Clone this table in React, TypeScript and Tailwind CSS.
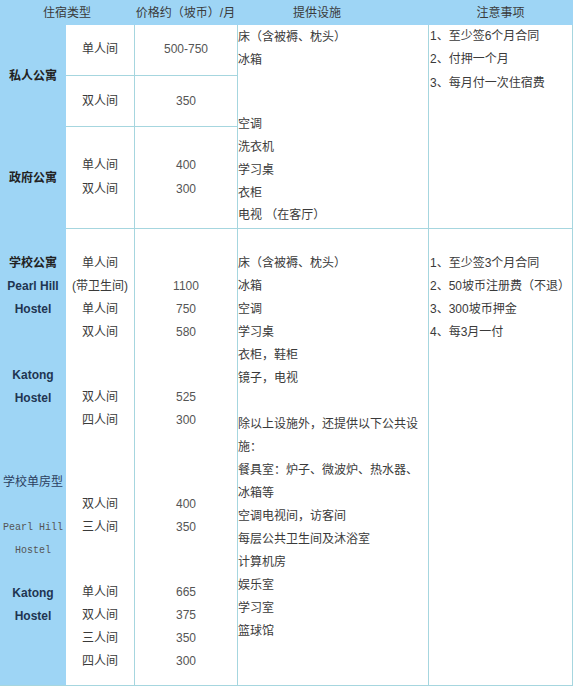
const line = "h-[23px] leading-[23px] whitespace-nowrap";
const navy = "font-bold text-[#1f3552] font-['Liberation_Sans',sans-serif]";
const mono = "text-[10px] text-[#555] font-['Liberation_Mono',monospace]";

const schoolFacilities = [
  "床（含被褥、枕头）",
  "冰箱",
  "空调",
  "学习桌",
  "衣柜，鞋柜",
  "镜子，电视",
  "\u00a0",
  "除以上设施外，还提供以下公共设",
  "施：",
  "餐具室：炉子、微波炉、热水器、",
  "冰箱等",
  "空调电视间，访客间",
  "每层公共卫生间及沐浴室",
  "计算机房",
  "娱乐室",
  "学习室",
  "篮球馆",
];

const schoolNotes = [
  "1、至少签3个月合同",
  "2、50坡币注册费（不退）",
  "3、300坡币押金",
  "4、每3月一付",
];

const Lines = ({ items, className = "" }: { items: string[]; className?: string }) => (
  <div className={className}>
    {items.map((t, i) => (
      <div key={i} className={line}>
        {t}
      </div>
    ))}
  </div>
);

export default function App() {
  return (
    <div className="w-[573px] bg-white text-[12px] text-[#3a3a3a] font-['Liberation_Sans','Noto_Sans_CJK_SC',sans-serif]">
      {/* 表头 */}
      <div className="flex h-[25px] items-center bg-[#9ed5f5] text-[#3a3a3a]">
        <div className="w-[134px] text-center">住宿类型</div>
        <div className="w-[103px] text-center">价格约（坡币）/月</div>
        <div className="w-[191px] pl-[56px]">提供设施</div>
        <div className="flex-1 text-center">注意事项</div>
      </div>

      {/* 私人公寓 / 政府公寓 */}
      <div className="grid grid-cols-[66px_68px_103px_191px_145px] grid-rows-[51px_51px_102px]">
        <div className="col-start-1 row-start-1 row-span-2 flex items-center justify-center bg-[#9ed5f5] font-bold text-[#222]">
          私人公寓
        </div>
        <div className="col-start-1 row-start-3 flex items-center justify-center bg-[#9ed5f5] font-bold text-[#222]">
          政府公寓
        </div>

        <div className="col-start-2 row-start-1 flex items-center justify-center border-b border-[#a6d6df] pb-[2px]">
          单人间
        </div>
        <div className="col-start-3 row-start-1 flex items-center justify-center border-b border-l border-[#a6d6df] pb-[2px] text-[#555]">
          500-750
        </div>
        <div className="col-start-2 row-start-2 flex items-center justify-center border-b border-[#a6d6df]">
          双人间
        </div>
        <div className="col-start-3 row-start-2 flex items-center justify-center border-b border-l border-[#a6d6df] text-[#555]">
          350
        </div>
        <div className="col-start-2 row-start-3 flex flex-col items-center justify-center border-b border-[#a6d6df] pb-[2px]">
          <div className="h-[24px] leading-[24px]">单人间</div>
          <div className="h-[24px] leading-[24px]">双人间</div>
        </div>
        <div className="col-start-3 row-start-3 flex flex-col items-center justify-center border-b border-l border-[#a6d6df] pb-[2px] text-[#555]">
          <div className="h-[24px] leading-[24px]">400</div>
          <div className="h-[24px] leading-[24px]">300</div>
        </div>

        <div className="col-start-4 row-start-1 row-span-3 border-b border-l border-[#a6d6df] pt-px leading-[22.7px]">
          <div className="whitespace-nowrap">床（含被褥、枕头）</div>
          <div>冰箱</div>
          <div className="mt-[42px]">空调</div>
          <div>洗衣机</div>
          <div>学习桌</div>
          <div>衣柜</div>
          <div className="whitespace-nowrap">电视 （在客厅）</div>
        </div>
        <div className="col-start-5 row-start-1 row-span-3 border-b border-l border-r border-[#a6d6df] pl-px leading-[23.4px]">
          <div>1、至少签6个月合同</div>
          <div>2、付押一个月</div>
          <div>3、每月付一次住宿费</div>
        </div>
      </div>

      {/* 学校公寓 / 学校单房型 */}
      <div className="grid h-[457px] grid-cols-[66px_68px_103px_191px_145px] border-b border-[#a6d6df]">
        <div className="flex flex-col items-center bg-[#9ed5f5] pt-[23px]">
          <div className={`${line} font-bold text-[#222]`}>学校公寓</div>
          <div className={`${line} ${navy}`}>Pearl Hill</div>
          <div className={`${line} ${navy}`}>Hostel</div>
          <div className={`${line} ${navy} mt-[43px]`}>Katong</div>
          <div className={`${line} ${navy}`}>Hostel</div>
          <div className={`${line} mt-[61px] text-[#2c4060]`}>学校单房型</div>
          <div className={`${line} ${mono} mt-[22px]`}>Pearl Hill</div>
          <div className={`${line} ${mono}`}>Hostel</div>
          <div className={`${line} ${navy} mt-[20px]`}>Katong</div>
          <div className={`${line} ${navy}`}>Hostel</div>
        </div>

        <div className="flex flex-col items-center pt-[23px]">
          <Lines items={["单人间", "(带卫生间)", "单人间", "双人间"]} className="text-center" />
          <Lines items={["双人间", "四人间"]} className="mt-[42px] text-center" />
          <Lines items={["双人间", "三人间"]} className="mt-[61px] text-center" />
          <Lines items={["单人间", "双人间", "三人间", "四人间"]} className="mt-[42px] text-center" />
        </div>

        <div className="flex flex-col items-center border-l border-[#a6d6df] pt-[23px] text-[#555]">
          <Lines items={["\u00a0", "1100", "750", "580"]} className="text-center" />
          <Lines items={["525", "300"]} className="mt-[42px] text-center" />
          <Lines items={["400", "350"]} className="mt-[61px] text-center" />
          <Lines items={["665", "375", "350", "300"]} className="mt-[42px] text-center" />
        </div>

        <div className="border-l border-[#a6d6df] pt-[23px]">
          <Lines items={schoolFacilities} />
        </div>

        <div className="border-l border-r border-[#a6d6df] pl-px pt-[23px]">
          <Lines items={schoolNotes} />
        </div>
      </div>
    </div>
  );
}
